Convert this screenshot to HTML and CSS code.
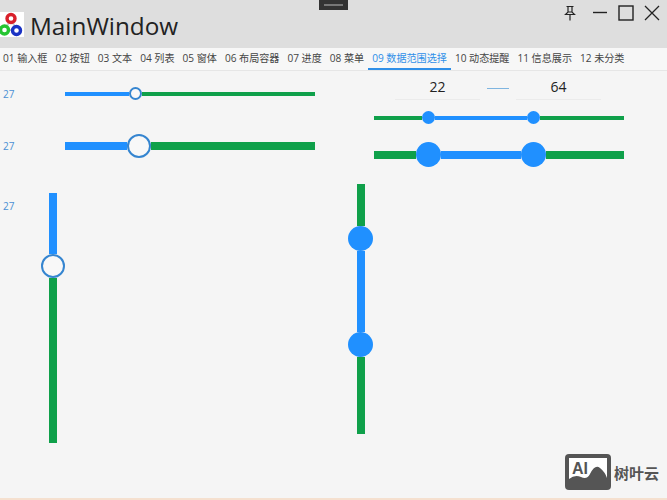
FILE: index.html
```html
<!DOCTYPE html>
<html>
<head>
    <meta charset="UTF-8">
    <title>MainWindow</title>
    <link rel="stylesheet" href="styles.css">
</head>
<body>

<div class="notch"><span></span></div>

<div class="titlebar">
    <svg class="logo" width="24" height="25" viewBox="0 0 24 25">
        <rect width="24" height="25" fill="#fff"/>
        <path d="M11 6 L5 18 M11 6 L16 18 M5 18 L16 18" stroke="#ccc" stroke-width="2" fill="none"/>
        <circle cx="11" cy="6.5" r="4" fill="#fff" stroke="#d9202a" stroke-width="3.4"/>
        <circle cx="4.5" cy="18" r="4" fill="#fff" stroke="#25c531" stroke-width="3.4"/>
        <circle cx="16.5" cy="18.5" r="4" fill="#fff" stroke="#1a32c4" stroke-width="3.4"/>
    </svg>
    <div class="title">MainWindow</div>
    <div class="controls">
        <svg class="pin" width="14" height="16" viewBox="0 0 14 16" fill="none" stroke="#222" stroke-width="1.2">
            <path d="M3.5 1.5 H10.5 M5 1.5 V7 H9 V1.5 M2.5 9.5 H11.5 L9 7 H5 Z M7 9.5 V15.5"/>
        </svg>
        <svg width="16" height="16" viewBox="0 0 16 16" stroke="#222" stroke-width="1.4">
            <path d="M1 7.5 H15"/>
        </svg>
        <svg width="16" height="16" viewBox="0 0 16 16" fill="none" stroke="#222" stroke-width="1.4">
            <rect x="1" y="1" width="14" height="14"/>
        </svg>
        <svg width="16" height="16" viewBox="0 0 16 16" stroke="#222" stroke-width="1.3">
            <path d="M1 1 L15 15 M15 1 L1 15"/>
        </svg>
    </div>
</div>

<div class="tabs">
    <a class="tab">01 输入框</a>
    <a class="tab">02 按钮</a>
    <a class="tab">03 文本</a>
    <a class="tab">04 列表</a>
    <a class="tab">05 窗体</a>
    <a class="tab">06 布局容器</a>
    <a class="tab">07 进度</a>
    <a class="tab">08 菜单</a>
    <a class="tab on">09 数据范围选择</a>
    <a class="tab">10 动态提醒</a>
    <a class="tab">11 信息展示</a>
    <a class="tab">12 未分类</a>
</div>

<div class="content">
    <div class="left">
        <div class="row row-small">
            <span class="val">27</span>
            <div class="slider small">
                <i class="bar blue" style="width: 64px"></i>
                <i class="thumb"></i>
                <i class="bar green grow"></i>
            </div>
        </div>
        <div class="row row-big">
            <span class="val">27</span>
            <div class="slider big">
                <i class="bar blue" style="width: 62px"></i>
                <i class="thumb"></i>
                <i class="bar green grow"></i>
            </div>
        </div>
        <div class="row row-vert">
            <span class="val val-vert">27</span>
            <div class="slider vert big">
                <i class="bar blue" style="height: 61px"></i>
                <i class="thumb"></i>
                <i class="bar green grow"></i>
            </div>
        </div>
    </div>

    <div class="right">
        <div class="inputs">
            <div class="num">22</div>
            <div class="dash"></div>
            <div class="num">64</div>
        </div>
        <div class="slider small range">
            <i class="bar green" style="width: 48px"></i>
            <i class="thumb fill"></i>
            <i class="bar blue grow"></i>
            <i class="thumb fill"></i>
            <i class="bar green" style="width: 84px"></i>
        </div>
        <div class="slider big range range-big">
            <i class="bar green" style="width: 42px"></i>
            <i class="thumb fill"></i>
            <i class="bar blue grow"></i>
            <i class="thumb fill"></i>
            <i class="bar green" style="width: 78px"></i>
        </div>
        <div class="slider vert big range-vert">
            <i class="bar green" style="height: 42px"></i>
            <i class="thumb fill"></i>
            <i class="bar blue grow"></i>
            <i class="thumb fill"></i>
            <i class="bar green" style="height: 77px"></i>
        </div>
    </div>
</div>

<div class="mark">
    <svg width="46" height="36" viewBox="0 0 46 36">
        <rect width="46" height="36" rx="4" fill="#555"/>
        <rect x="4" y="4" width="38" height="28" fill="#fff"/>
        <path d="M4 32 V25 Q10 20 16 23 T25 20 Q30 10 35 14 T42 24 V32 Z" fill="#555"/>
        <text x="7" y="20" font-family="Liberation Sans" font-weight="bold" font-size="16" fill="#555">AI</text>
    </svg>
    <span>树叶云</span>
</div>
<div class="edge"></div>

</body>
</html>
```

FILE: styles.css
```css
* { margin: 0; padding: 0; box-sizing: border-box;}
html, body { height: 500px; overflow: hidden;}
body { background: #f5f5f5; position: relative; font-family: "Open Sans", "Noto Sans CJK SC", sans-serif;}

.notch { position: absolute; top: 0; left: 319px; width: 29px; height: 10px; background: #333; display: flex; align-items: center; justify-content: center;}
.notch span { width: 19px; height: 2px; background: #777;}

.titlebar { height: 48px; background: #dedede; display: flex; padding-top: 12px;}
.logo { display: block;}
.title { font-size: 24.3px; line-height: 27px; color: #222; margin-left: 6px; flex: 1;}
.controls { display: flex; gap: 10px; margin-top: -7px; padding-right: 7px; height: 16px;}
.pin { margin-right: 5px;}

.tabs { height: 23px; display: flex; border-bottom: 1px solid #e6e6e6; background: #f7f7f7;}
.tab { font-size: 10.1px; line-height: 21px; color: #444; padding: 0 4px; white-space: nowrap; height: 22px;}
.tab:first-child { margin-left: -1px;}
.tab.on { color: #2f8fe8; border-bottom: 2px solid #2f8fe8;}

.content { display: flex;}
.left { width: 349px; padding-left: 3px;}
.right { padding-left: 25px; width: 318px;}

.row { display: flex; align-items: center;}
.row-small { margin-top: 16px; height: 13px;}
.row-big { margin-top: 34px; height: 24px;}
.row-vert { align-items: flex-start; margin-top: 35px;}
.val { width: 62px; font-size: 10px; color: #4a90d4;}
.val-vert { width: 38px; line-height: 14px; margin-top: 6px;}

.slider { display: flex; align-items: center; width: 250px;}
.slider i { display: block;}
.bar { flex: none;}
.grow { flex: 1;}
.blue { background: #2090ff;}
.green { background: #0fa04a;}
.thumb { flex: none; border-radius: 50%; background: #f8f8f8; border: 2px solid #3585d0;}
.thumb.fill { background: #2090ff; border: 0;}

.small .bar { height: 4px;}
.small .thumb { width: 13px; height: 13px;}
.big .bar { height: 8px;}
.big .thumb { width: 24px; height: 24px;}
.big .thumb.fill { width: 25px; height: 25px;}

.vert { flex-direction: column; width: 24px; height: 250px;}
.vert .bar { width: 8px; height: auto;}
.vert.big .bar.grow { height: auto;}

.inputs { display: flex; gap: 7px; margin-left: 21px; margin-top: 5px; height: 24px;}
.num { width: 85px; height: 24px; font-size: 14px; line-height: 22px; text-align: center; color: #222; border-bottom: 1px solid #ebebeb;}
.dash { width: 22px; height: 1px; background: #7fb5e0; margin-top: 12px;}
.range { margin-top: 11px;}
.range-big { margin-top: 18px;}
.range-vert { margin-top: 17px; margin-left: -26px; width: 25px;}

.mark { position: absolute; left: 565px; top: 454px; display: flex; align-items: center; gap: 3px; font-size: 15px; font-weight: bold; color: #555;}
.mark svg { display: block;}
.edge { position: absolute; left: 0; right: 0; bottom: 0; height: 2px; background: #f5e0cf;}
```
